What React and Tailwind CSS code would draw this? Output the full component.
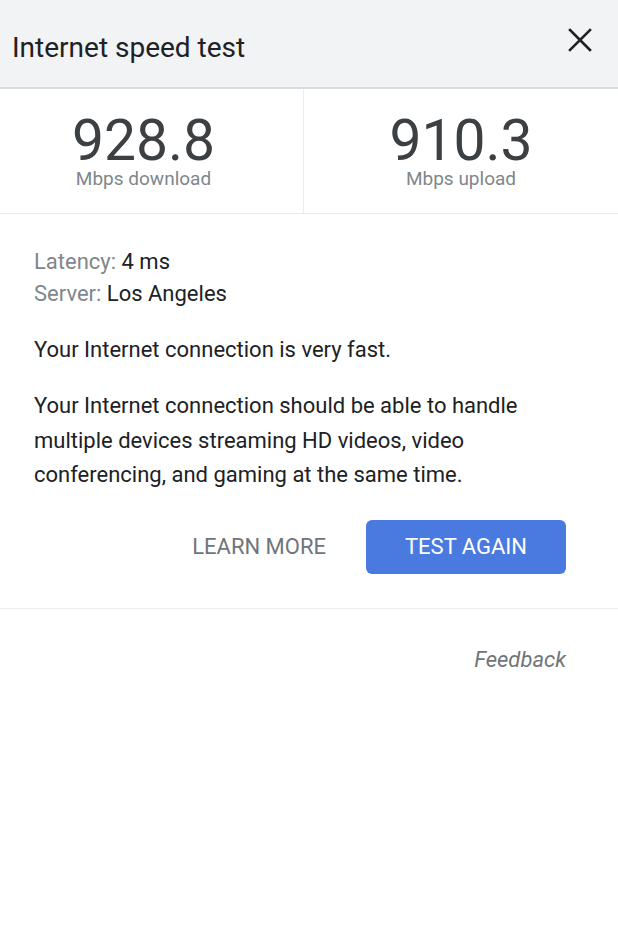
export default function App() {
  return (
    <div className="w-[618px] h-[934px] bg-white font-['Roboto',sans-serif] overflow-hidden">
      <div className="h-[89px] bg-[#f1f3f4] border-b-2 border-[#dadce0] flex items-center justify-between pl-3 pr-[26px] pt-[8px]">
        <div className="text-[28px] text-[#202124] leading-none">Internet speed test</div>
        <svg width="24" height="24" viewBox="0 0 24 24" className="mb-[16px]">
          <path d="M2 2 L22 22 M22 2 L2 22" stroke="#202124" strokeWidth="2.6" strokeLinecap="square" />
        </svg>
      </div>
      <div className="grid grid-cols-[304px_1fr] border-b border-[#ececec] h-[125px]">
        <div className="border-r border-[#ececec] flex flex-col items-center pt-[24px] pr-[16px]">
          <div className="text-[57px] leading-[56px] text-[#3c4043]">928.8</div>
          <div className="text-[19px] leading-[20px] text-[#80868b]">Mbps download</div>
        </div>
        <div className="flex flex-col items-center pt-[24px]">
          <div className="text-[57px] leading-[56px] text-[#3c4043]">910.3</div>
          <div className="text-[19px] leading-[20px] text-[#80868b]">Mbps upload</div>
        </div>
      </div>
      <div className="px-[34px] pt-[32px] pb-[34px] border-b border-[#ececec]">
        <div className="text-[22px] leading-[32px]">
          <div><span className="text-[#80868b]">Latency: </span><span className="text-[#202124]">4 ms</span></div>
          <div><span className="text-[#80868b]">Server: </span><span className="text-[#202124]">Los Angeles</span></div>
        </div>
        <p className="text-[22px] leading-[34px] text-[#202124] mt-[23px]">Your Internet connection is very fast.</p>
        <p className="text-[22px] leading-[34.5px] text-[#202124] mt-[22px]">
          Your Internet connection should be able to handle multiple devices streaming HD videos, video conferencing, and gaming at the same time.
        </p>
        <div className="flex justify-end items-center mt-[27px] pr-[18px]">
          <button className="text-[22px] text-[#70757a] mr-[40px]">LEARN MORE</button>
          <button className="w-[200px] h-[54px] rounded-[6px] bg-[#4a7ae0] text-white text-[22px]">TEST AGAIN</button>
        </div>
      </div>
      <div className="flex justify-end pr-[52px] pt-[34px]">
        <span className="text-[22px] italic text-[#70757a]">Feedback</span>
      </div>
    </div>
  );
}
